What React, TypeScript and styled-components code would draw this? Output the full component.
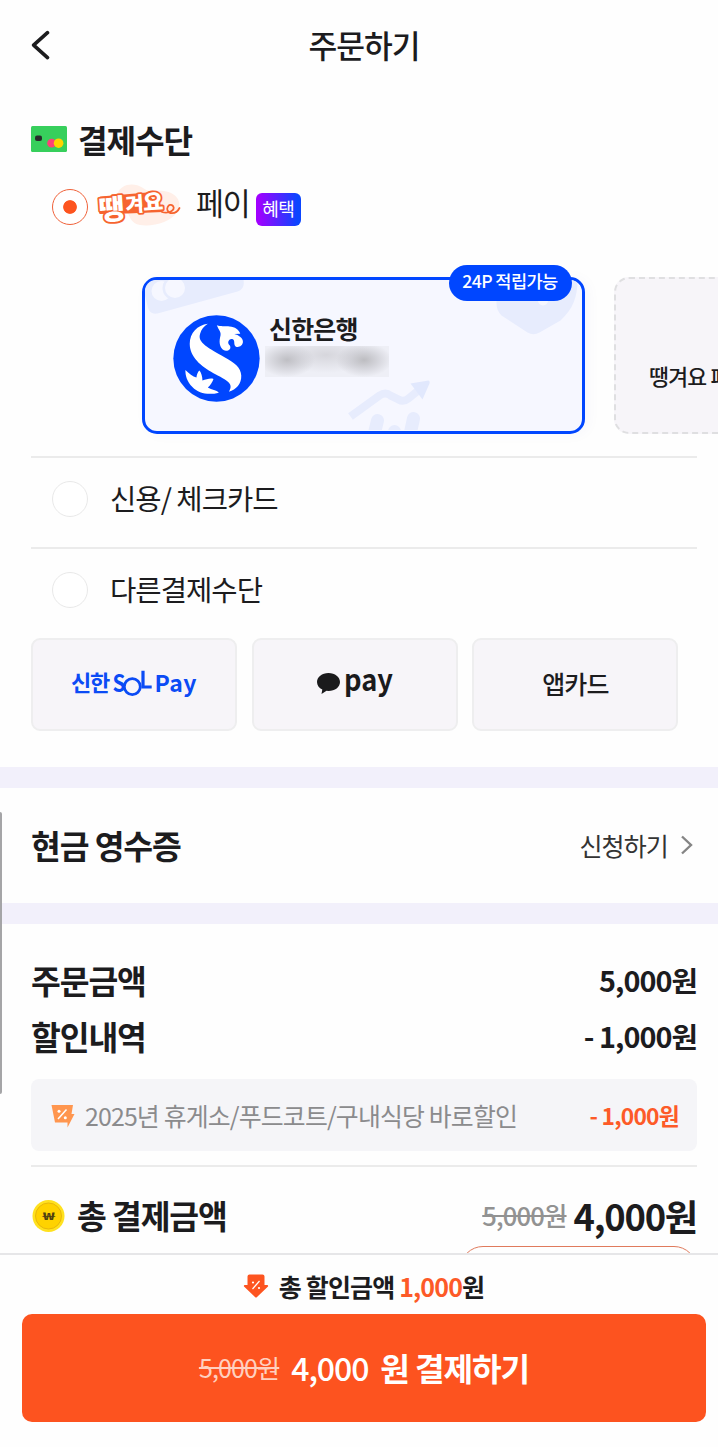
import React from "react";
import styled, { createGlobalStyle } from "styled-components";

const GlobalStyle = createGlobalStyle`
  * { box-sizing: border-box; }
  body {
    margin: 0;
    background: #fefefe;
    font-family: "Noto Sans CJK KR", "Noto Sans", sans-serif;
    color: #1c1c1e;
  }
`;

const Screen = styled.main`
  position: relative;
  width: 718px;
  height: 1447px;
  display: flex;
  flex-direction: column;
  overflow: hidden;
`;

const Label = styled.span<{ $size: number; $weight?: number; $color?: string; $strike?: boolean; $spacing?: number }>`
  font-size: ${(p) => p.$size}px;
  font-weight: ${(p) => p.$weight ?? 400};
  color: ${(p) => p.$color ?? "#1c1c1e"};
  letter-spacing: ${(p) => p.$spacing ?? -0.034}em;
  line-height: 1.2;
  white-space: pre;
  text-decoration: ${(p) => (p.$strike ? "line-through" : "none")};
  text-decoration-thickness: 2px;
`;

const Header = styled.header`
  height: 92px;
  flex: none;
  display: grid;
  grid-template-columns: 52px 1fr 52px;
  align-items: center;
  padding: 0 0 3px 31px;
  text-align: center;
`;

const HeaderTitle = styled.h1`
  margin: 0 0 0 -21px;
  line-height: 1;
`;

const SectionTitle = styled.div`
  height: 64px;
  margin-top: 14px;
  padding: 2px 31px 0;
  display: flex;
  align-items: center;
  gap: 11px;
  flex: none;
`;

const PayRow = styled.div`
  height: 74px;
  flex: none;
  display: flex;
  align-items: center;
  padding-left: 52px;
`;

const PayName = styled.div`
  margin: 0 0 9px 15px;
  line-height: 1;
`;

const Radio = styled.span<{ $on?: boolean }>`
  width: 36px;
  height: 36px;
  flex: none;
  border-radius: 50%;
  border: 1.5px solid ${(p) => (p.$on ? "#f0623a" : "#e9e9e9")};
  background: ${(p) => (p.$on ? "radial-gradient(circle, #fd541f 6.4px, #fff 7.2px)" : "#fff")};
`;

const BrandLogo = styled.svg`
  margin: 0 0 5px 9px;
  flex: none;
  overflow: visible;
`;

const Benefit = styled.span`
  margin: 5px 0 0 6px;
  width: 45px;
  height: 33px;
  border-radius: 6px;
  display: flex;
  align-items: center;
  justify-content: center;
  padding-bottom: 2px;
  background: linear-gradient(90deg, #a100ff 5%, #0b45ff 92%);
`;

const Carousel = styled.div`
  display: flex;
  gap: 29px;
  padding: 33px 0 22px 142px;
  flex: none;
  overflow: hidden;
`;

const BankCard = styled.div`
  position: relative;
  width: 443px;
  height: 157px;
  flex: none;
  border-radius: 15px;
  border: 3.5px solid #0046ff;
  background: #f6f7ff;
  box-shadow: 4px 1px 14px rgba(0, 40, 160, 0.03);
  display: flex;
  padding: 35px 0 0 28px;
`;

const CardArt = styled.svg`
  position: absolute;
  left: 0;
  top: 0;
  border-radius: 11px;
`;

const BankLogo = styled.svg`
  position: relative;
  flex: none;
`;

const BankInfo = styled.div`
  position: relative;
  display: flex;
  flex-direction: column;
  margin-top: -2px;
  padding: 0 0 0 9px;
`;

const MaskedNumber = styled.div`
  width: 124px;
  height: 31px;
  margin: 3px 0 0 -4px;
  background:
    radial-gradient(ellipse 28px 17px at 22px 14px, #bfbfc4 0%, rgba(198, 198, 204, 0.6) 50%, rgba(210, 210, 216, 0) 100%),
    radial-gradient(ellipse 28px 17px at 99px 14px, #bdbdc1 0%, rgba(196, 196, 202, 0.6) 50%, rgba(210, 210, 216, 0) 100%),
    radial-gradient(ellipse 46px 18px at 61px 9px, #d6d6dc 0%, rgba(213, 213, 220, 0) 100%),
    #eeeff6;
`;

const PointBadge = styled.div`
  position: absolute;
  top: -15px;
  right: 10.5px;
  width: 123px;
  height: 36px;
  border-radius: 18px;
  background: #0046ff;
  display: flex;
  align-items: center;
  justify-content: center;
  padding-bottom: 4px;
`;

const AddCard = styled.div`
  width: 443px;
  height: 157px;
  flex: none;
  border-radius: 15px;
  border: 2px dashed #dfdfe1;
  background: #f7f5f9;
  display: flex;
  align-items: center;
  padding: 41px 0 0 33px;
`;

const Rule = styled.hr`
  width: 666px;
  height: 2px;
  margin: 0 0 0 31px;
  border: 0;
  flex: none;
  background: #ebebeb;
`;

const OptionRow = styled.div`
  height: 89px;
  padding: 23px 0 0 52px;
  flex: none;
  display: flex;
  align-items: flex-start;
  gap: 22px;
`;

const Methods = styled.div`
  display: grid;
  grid-template-columns: repeat(3, 206px);
  gap: 14.7px;
  padding-left: 31px;
  flex: none;
`;

const MethodButton = styled.button`
  height: 93px;
  border: 2px solid #eeeeef;
  border-radius: 9px;
  background: #f7f5f9;
  font-family: inherit;
  padding: 0 0 4px;
  display: flex;
  align-items: center;
  justify-content: center;

  svg { overflow: visible; }
`;

const Band = styled.div`
  height: 21px;
  flex: none;
  background: #f2f0fb;
`;

const Spacer = styled.div<{ $h: number }>`
  height: ${(p) => p.$h}px;
  flex: none;
`;

const SplitRow = styled.div<{ $height: number }>`
  height: ${(p) => p.$height}px;
  flex: none;
  display: flex;
  align-items: center;
  justify-content: space-between;
  padding: 0 21px 1px 31px;
`;

const Inline = styled.div<{ $gap: number; $shift?: number }>`
  display: flex;
  align-items: center;
  gap: ${(p) => p.$gap}px;
  padding-left: ${(p) => p.$shift ?? 0}px;
`;

const DiscountBox = styled.div`
  width: 666px;
  height: 72px;
  margin: 14px 0 14px 31px;
  flex: none;
  border-radius: 8px;
  background: #f5f5f8;
  display: flex;
  align-items: center;
  justify-content: space-between;
  padding: 1px 18px 0 20px;
`;

const TotalArea = styled.section`
  height: 86px;
  flex: none;
  overflow: hidden;
`;

const CouponPill = styled.div`
  width: 237px;
  height: 46px;
  margin: -19px 0 0 460px;
  border: 1.5px solid #e07a5c;
  border-radius: 23px;
`;

const Footer = styled.footer`
  flex: 1;
  border-top: 2px solid #e6e6e8;
  background: #fefefe;
`;

const Saving = styled.div`
  height: 59px;
  display: flex;
  align-items: center;
  justify-content: center;
  padding-top: 3px;
`;

const PayButton = styled.button`
  width: 684px;
  height: 108px;
  margin-left: 22px;
  border: 0;
  border-radius: 10px;
  background: #fd531f;
  font-family: inherit;
  display: flex;
  align-items: center;
  justify-content: center;
  padding: 0 0 2px;
`;

const ScrollMark = styled.div`
  position: absolute;
  left: 0;
  top: 812px;
  width: 1.5px;
  height: 282px;
  background: #a5a5a7;
  border-radius: 0 2px 2px 0;
`;

function BackIcon() {
  return (
    <svg width="20" height="30" viewBox="0 0 20 30" fill="none" stroke="#1c1c1e" strokeWidth="3.6" strokeLinecap="round" strokeLinejoin="round">
      <path d="M16.5 2.6 L2.6 15.1 L16.5 27.6" />
    </svg>
  );
}

function CreditCardIcon() {
  return (
    <svg width="36" height="26" viewBox="0 0 36 26">
      <rect width="36" height="26" rx="1.5" fill="#37cf5c" />
      <rect x="4" y="9.6" width="7" height="5.4" rx="2" fill="#272b2a" />
      <circle cx="20.6" cy="17.2" r="4.4" fill="#ff4078" />
      <circle cx="27.6" cy="17.2" r="4.8" fill="#ffd400" />
    </svg>
  );
}

function DdaengLogo() {
  return (
    <BrandLogo width="84" height="42" viewBox="0 0 84 42">
      <path d="M21 9 C23 1 36 -3 46 4 C52 9 58 6 67 7 C80 9 86 18 80 28 C74 38 56 43 43 41 C32 39 33 30 27 22 C22 18 20 15 21 9Z" fill="#ffefe8" />
      <path d="M3.500 12.500 L50 8.500 L66 28 L30 29.500 L3.500 30 Q2 30 2 28.500 V14 Q2 12.500 3.500 12.500Z" fill="#f6642f" />
      <g fontWeight="900" fill="#fff" stroke="#f6642f" strokeWidth="3.6" strokeLinejoin="round" paintOrder="stroke">
        <text fontSize="28" transform="translate(2.500 36.200) rotate(-4)">땡</text>
        <text fontSize="20" transform="translate(29 28) rotate(-4)">겨</text>
        <text fontSize="22" transform="translate(46.500 26.800) rotate(-4)">요</text>
      </g>
      <path d="M65 28 C72 30 79 26 76 22 C72 18 67 26 73 29 C78 30 81 27 82.500 24" fill="none" stroke="#f6642f" strokeWidth="1.8" strokeLinecap="round" />
    </BrandLogo>
  );
}

function ShinhanMark() {
  return (
    <BankLogo width="87" height="87" viewBox="131 179 260 260">
      <circle cx="261" cy="309" r="129" fill="#0046ff" />
      <g fill="#fff">
        <path d="M235 205 C204 209 181 233 181 265 C181 305 215 332 252 353 C292 374 314 383 298 408 C320 402 336 385 335 360 C334 335 314 321 285 305 C238 278 203 262 212 235 C215 222 224 212 235 205Z" />
        <path d="M262 210 C276 215 288 211 300 213 C316 214 328 222 332 235 L314 236 C327 239 341 248 340 260 C339 272 326 278 318 273 C311 268 318 253 308 251 C299 249 293 260 298 267 C307 275 302 286 289 286 C273 284 267 264 272 245 C277 230 268 226 262 210Z" />
        <path d="M168 343 C179 354 190 363 201 366 C202 356 206 348 210 345 C215 351 219 362 219 375 C230 371 243 367 252 370 C249 379 243 388 235 396 C247 403 261 404 268 411 C238 419 208 414 189 394 C172 377 168 359 168 343Z" />
      </g>
    </BankLogo>
  );
}

function CardPattern() {
  return (
    <CardArt width="436" height="150" viewBox="145.5 280.5 436 150">
      <path d="M146 280 H244 C245 287 243 290 238 292 L158 314 C151 315 149 311 148 306 L145 294Z" fill="#e7ecfd" />
      <circle cx="162" cy="291.5" r="10" fill="#f6f7ff" />
      <circle cx="175.5" cy="288.5" r="12.5" fill="#e7ecfd" />
      <circle cx="175.5" cy="288.5" r="10" fill="#f6f7ff" />
      <path d="M497 280 H578 C578 297 574 309 561 321 L540 333 Q534 336.500 528 333 L502 316 Q497 311 497 304Z" fill="#e7ecfd" />
      <circle cx="543.500" cy="301" r="5" fill="#f6f7ff" />
      <g fill="none" stroke="#e7ecfd">
        <path d="M351 417 L380 396 Q386 392 391 396 L399 400 Q404 403 409 399 L420 390" strokeWidth="8" />
        <path d="M378 421 L373 442 M414 419 L409 442 M395 432 V440" strokeWidth="13" strokeLinecap="round" />
      </g>
      <path d="M411 384 L429 381 Q431 382 430 384 L423 400Z" fill="#e1e8fd" />
    </CardArt>
  );
}

function SolPayLogo() {
  return (
    <svg width="128" height="32" viewBox="0 0 128 32" fill="#0b4bf5">
      <text x="1" y="24" fontSize="22" fontWeight="700" letterSpacing="-1.2">신한</text>
      <text x="42.500" y="24.500" fontSize="23.500" fontWeight="700" textLength="13" lengthAdjust="spacingAndGlyphs">S</text>
      <circle cx="62.300" cy="19.700" r="8" fill="#f7f5f9" stroke="#0b4bf5" strokeWidth="2.800" />
      <path d="M73 3.800 V20 H81.700" fill="none" stroke="#0b4bf5" strokeWidth="3.200" />
      <text x="84.500" y="24.800" fontSize="23" fontWeight="700" letterSpacing="0.400">Pay</text>
    </svg>
  );
}

function KakaoPayLogo() {
  return (
    <svg width="78" height="36" viewBox="0 0 78 36" fill="#1a1a1c">
      <path d="M12.500 8 C19 8 24 12 24 17 C24 22 19 26 12.500 26 L10.500 25.800 L5.500 29 L6.300 24.500 C3 23 1 20.300 1 17 C1 12 6 8 12.500 8Z" />
      <text x="28" y="25.500" fontSize="29.500" fontWeight="700" textLength="49" lengthAdjust="spacingAndGlyphs">pay</text>
    </svg>
  );
}

function CouponIcon() {
  return (
    <svg width="24" height="24" viewBox="0 0 24 24">
      <path d="M0.500 1 H22 L20.500 10 H23.500 L16.500 23.500 V18.500 H4Z" fill="#ff964f" />
      <path d="M7 15 L15.500 5.500" stroke="#fff" strokeWidth="1.500" />
      <circle cx="8" cy="7.200" r="1.500" fill="#fff" />
      <circle cx="14.300" cy="13.800" r="1.500" fill="#fff" />
    </svg>
  );
}

function CoinIcon() {
  return (
    <svg width="34" height="34" viewBox="0 0 34 34">
      <circle cx="17.500" cy="17" r="16" fill="#ffe11f" />
      <circle cx="17.500" cy="17" r="13" fill="#ffd200" stroke="#e8b70b" strokeWidth="1" />
      <text x="11.700" y="21.200" fontSize="10.500" fontWeight="700" fill="#4f4110" textLength="12" lengthAdjust="spacingAndGlyphs">₩</text>
    </svg>
  );
}

function DownIcon() {
  return (
    <svg width="26" height="24" viewBox="0 0 26 24">
      <path d="M6.500 0.500 H19.500 Q21.500 0.500 21.500 2.500 V11 H24.500 Q25.500 11.500 25 12.500 L14 23 Q13 24 12 23 L1 12.500 Q0.500 11.500 1.500 11 H4.500 V2.500 Q4.500 0.500 6.500 0.500Z" fill="#fd5420" />
      <path d="M9.500 15 L16.500 7" stroke="#fff" strokeWidth="1.200" />
      <circle cx="10" cy="8.500" r="1.100" fill="#fff" />
      <circle cx="16" cy="14" r="1.100" fill="#fff" />
    </svg>
  );
}

export default function App() {
  return (
    <>
      <GlobalStyle />
      <Screen>
        <Header>
          <BackIcon />
          <HeaderTitle><Label $size={31.3} $weight={500}>주문하기</Label></HeaderTitle>
        </Header>

        <SectionTitle>
          <CreditCardIcon />
          <Label $size={32.2} $weight={700}>결제수단</Label>
        </SectionTitle>
        <PayRow>
          <Radio $on />
          <DdaengLogo />
          <PayName><Label $size={30.3}>페이</Label></PayName>
          <Benefit><Label $size={18} $color="#fff">혜택</Label></Benefit>
        </PayRow>

        <Carousel>
          <BankCard>
            <CardPattern />
            <ShinhanMark />
            <BankInfo>
              <Label $size={25} $weight={700}>신한은행</Label>
              <MaskedNumber />
            </BankInfo>
            <PointBadge><Label $size={17.6} $weight={500} $color="#fff">24P 적립가능</Label></PointBadge>
          </BankCard>
          <AddCard><Label $size={21.6} $weight={500}>땡겨요 페이 등록</Label></AddCard>
        </Carousel>

        <Rule />
        <OptionRow>
          <Radio />
          <Label $size={28.6}>신용/ 체크카드</Label>
        </OptionRow>
        <Rule />
        <OptionRow>
          <Radio />
          <Label $size={28.6}>다른결제수단</Label>
        </OptionRow>

        <Methods>
          <MethodButton><SolPayLogo /></MethodButton>
          <MethodButton><KakaoPayLogo /></MethodButton>
          <MethodButton><Label $size={25} $weight={500}>앱카드</Label></MethodButton>
        </Methods>

        <Spacer $h={36} />
        <Band />
        <SplitRow $height={115}>
          <Label $size={32.4} $weight={700}>현금 영수증</Label>
          <Inline $gap={13}>
            <Label $size={25} $color="#333">신청하기</Label>
            <svg width="16" height="20" viewBox="0 0 16 20" fill="none" stroke="#858585" strokeWidth="2.4">
              <path d="M1 1.500 L10 10 L1 18.500" />
            </svg>
          </Inline>
        </SplitRow>
        <Band />

        <Spacer $h={29} />
        <SplitRow $height={56}>
          <Label $size={32.4} $weight={700}>주문금액</Label>
          <Label $size={28.8} $weight={700}>5,000원</Label>
        </SplitRow>
        <SplitRow $height={56}>
          <Label $size={32.4} $weight={700}>할인내역</Label>
          <Label $size={28.8} $weight={700}>- 1,000원</Label>
        </SplitRow>
        <DiscountBox>
          <Inline $gap={10}>
            <CouponIcon />
            <Label $size={24.9} $color="#8b8b8d">2025년 휴게소/푸드코트/구내식당 바로할인</Label>
          </Inline>
          <Label $size={22.800} $weight={700} $color="#fd5a28">- 1,000원</Label>
        </DiscountBox>
        <Rule />
        <TotalArea>
          <SplitRow $height={98}>
            <Inline $gap={12}>
              <CoinIcon />
              <Label $size={32.4} $weight={700}>총 결제금액</Label>
            </Inline>
            <Inline $gap={7}>
              <Label $size={25.6} $weight={500} $color="#929292" $strike>5,000원</Label>
              <Label $size={36.3} $weight={700}>4,000원</Label>
            </Inline>
          </SplitRow>
          <CouponPill />
        </TotalArea>

        <Footer>
          <Saving>
            <Inline $gap={10} $shift={9}>
              <DownIcon />
              <span>
                <Label $size={25} $weight={700}>총 할인금액 </Label>
                <Label $size={25} $weight={700} $color="#fd5a28">1,000</Label>
                <Label $size={25} $weight={700}>원</Label>
              </span>
            </Inline>
          </Saving>
          <PayButton>
            <Inline $gap={12}>
              <Label $size={25} $color="#ffd0bf" $strike>5,000원</Label>
              <Label $size={32} $weight={500} $color="#fff">4,000</Label>
              <Label $size={32.2} $weight={700} $color="#fff">원 결제하기</Label>
            </Inline>
          </PayButton>
        </Footer>
        <ScrollMark />
      </Screen>
    </>
  );
}
